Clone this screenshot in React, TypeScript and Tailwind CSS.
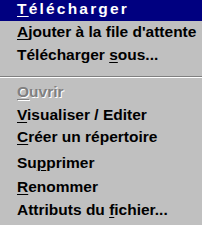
import React from "react";

type Item = { pre: string; u: string; post: string; disabled?: boolean };

const items: Item[] = [
  { pre: "", u: "A", post: "jouter à la file d'attente" },
  { pre: "Télécharger ", u: "s", post: "ous..." },
  { pre: "", u: "O", post: "uvrir", disabled: true },
  { pre: "", u: "V", post: "isualiser / Editer" },
  { pre: "", u: "C", post: "réer un répertoire" },
  { pre: "Su", u: "p", post: "primer" },
  { pre: "", u: "R", post: "enommer" },
  { pre: "Attributs du ", u: "f", post: "ichier..." },
];

function Row({ it, h }: { it: Item; h: number }) {
  return (
    <div
      className={
        "pl-[17px] leading-[18px] whitespace-nowrap " +
        (it.disabled ? "text-[#808080] [text-shadow:1px_1px_0_#ffffff]" : "text-black")
      }
      style={{ height: h }}
    >
      {it.pre}
      <span className="underline decoration-1 underline-offset-2">{it.u}</span>
      {it.post}
    </div>
  );
}

export default function App() {
  return (
    <div
      className="w-[202px] h-[225px] overflow-hidden bg-[#c0c0c0] font-bold text-[15.5px] flex flex-col"
      style={{ fontFamily: '"Liberation Sans", Arial, sans-serif' }}
    >
      <div className="h-[23px]">
        <div className="h-[21px] bg-[#000080] text-white pl-[17px] leading-[18px] tracking-[2.2px] whitespace-nowrap">
          <span className="underline decoration-1 underline-offset-2">T</span>élécharger
        </div>
      </div>
      <Row it={items[0]} h={23} />
      <Row it={items[1]} h={23} />
      <div className="h-[14px] flex flex-col pt-[7px]">
        <div className="h-px bg-[#808080]" />
        <div className="h-px bg-white" />
      </div>
      <Row it={items[2]} h={23} />
      <Row it={items[3]} h={22} />
      <Row it={items[4]} h={26} />
      <Row it={items[5]} h={24} />
      <Row it={items[6]} h={23} />
      <Row it={items[7]} h={24} />
    </div>
  );
}
